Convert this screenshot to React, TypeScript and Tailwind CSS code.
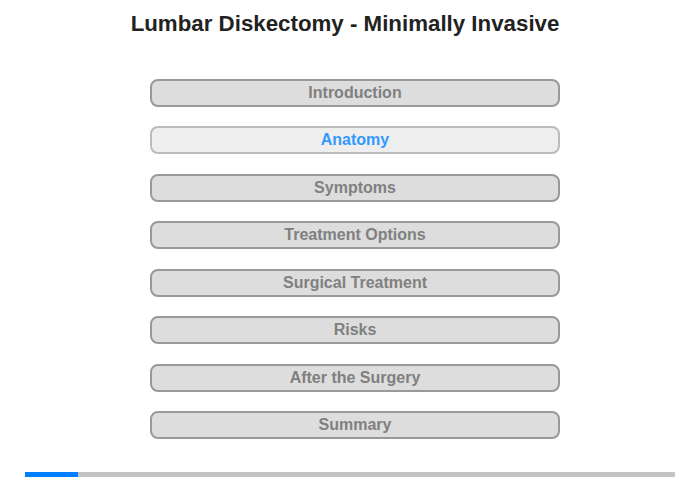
const items = [
  "Introduction",
  "Anatomy",
  "Symptoms",
  "Treatment Options",
  "Surgical Treatment",
  "Risks",
  "After the Surgery",
  "Summary",
];

export default function App() {
  const active = 1;
  return (
    <div className="w-[700px] h-[480px] bg-white flex flex-col font-['Liberation_Sans',Arial,sans-serif]">
      <h1 className="pt-[11px] pr-[10px] h-[78.5px] text-center text-[22.3px] leading-[26px] font-bold text-[#222222]">
        Lumbar Diskectomy - Minimally Invasive
      </h1>

      <div className="flex flex-col items-center gap-[19.5px] pl-[10px]">
        {items.map((name, i) => (
          <div
            key={name}
            className={
              i === active
                ? "w-[410px] h-[28px] rounded-[8px] border-2 border-[#bbbbbb] bg-[#eeeeee] flex items-center justify-center text-[16px] font-bold text-[#3399ff]"
                : "w-[410px] h-[28px] rounded-[8px] border-2 border-[#999999] bg-[#dddddd] flex items-center justify-center text-[16px] font-bold text-[#808080]"
            }
          >
            {name}
          </div>
        ))}
      </div>

      <div className="mt-auto mb-[3px] mx-[25px] h-[5px] bg-[#c4c4c4] flex">
        <div className="w-[53px] h-full bg-[#0080ff]" />
      </div>
    </div>
  );
}
